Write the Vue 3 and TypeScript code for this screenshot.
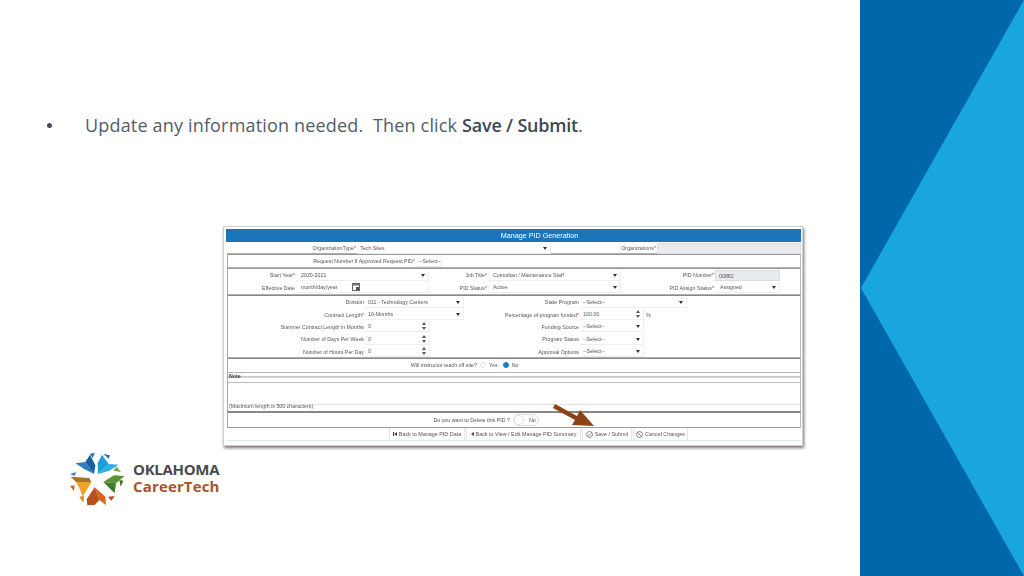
<script setup lang="ts">
const shards: { p: string; f: string }[] = [
  { p: '28,40 58,36 84,72 56,58', f: '#2a7fc1' },
  { p: '58,36 72,14 88,46 84,72', f: '#155f9f' },
  { p: '72,12 86,8 80,24', f: '#1e6aa8' },
  { p: '12,72 30,66 26,78', f: '#2d8bc8' },
  { p: '96,72 95,40 108,14 128,42', f: '#1b9fdc' },
  { p: '96,72 128,42 158,44 130,62', f: '#2cb0e6' },
  { p: '112,12 132,16 128,26', f: '#1677b8' },
  { p: '142,62 152,50 165,66', f: '#7fa642' },
  { p: '112,96 144,76 176,78 150,100', f: '#5a9236' },
  { p: '112,96 150,100 146,130', f: '#3f7a2a' },
  { p: '160,90 172,92 164,110', f: '#3f6f26' },
  { p: '86,112 118,140 120,165 100,150', f: '#d9641f' },
  { p: '86,112 100,150 86,165 64,166 62,148', f: '#b84f1e' },
  { p: '126,140 146,138 136,152', f: '#b5482a' },
  { p: '40,140 54,138 52,158', f: '#d68a2a' },
  { p: '14,80 70,84 76,96 30,96', f: '#a96f2b' },
  { p: '30,96 76,96 50,140 42,118', f: '#eda523' },
  { p: '12,108 26,106 24,124', f: '#b0742a' }
]
</script>

<template>
  <div class="slide">
    <main class="main">
      <div class="bullet-row">
        <span class="dot"></span>
        <p class="line">Update any information needed.&nbsp; Then click <b>Save / Submit</b>.</p>
      </div>

      <section class="win">
        <svg class="arrow" width="44" height="26" viewBox="0 0 44 26">
          <path d="M2 1 L24 13 L27 7 L41 23 L19 22 L22 17 L0 5 Z" fill="#8c4416" />
        </svg>
        <h1 class="head">Manage PID Generation</h1>

        <div class="row r1">
          <label class="lb" style="width:130px">OrganizationType<i>*</i></label>
          <div class="ctl sel" style="width:194px">Tech Sites</div>
          <label class="lb" style="width:106px">Organizations<i>*</i></label>
          <div class="ctl off" style="width:144px"></div>
        </div>

        <div class="box r2">
          <div class="row">
            <label class="lb" style="width:188px">Request Number If Approved Request PID<i>*</i></label>
            <div class="ctl">--Select--</div>
          </div>
        </div>

        <div class="box s3">
          <div class="row">
            <label class="lb" style="width:68px">Start Year<i>*</i></label>
            <div class="ctl sel" style="width:133px">2020-2021</div>
            <label class="lb" style="width:59px">Job Title<i>*</i></label>
            <div class="ctl sel" style="width:133px">Custodian / Maintenance Staff</div>
            <label class="lb" style="width:94px">PID Number<i>*</i></label>
            <div class="ctl off" style="width:65px">00882</div>
          </div>
          <div class="row">
            <label class="lb" style="width:68px">Effective Date</label>
            <div class="ctl date" style="width:133px">
              month/day/year
              <svg class="cal" width="8" height="8" viewBox="0 0 8 8">
                <rect x=".5" y=".5" width="7" height="7" fill="#fff" stroke="#666" />
                <rect x="1" y="1" width="6" height="1.5" fill="#777" />
                <rect x="4" y="4" width="3" height="3" fill="#555" />
              </svg>
            </div>
            <label class="lb" style="width:59px">PID Status<i>*</i></label>
            <div class="ctl sel" style="width:133px">Active</div>
            <label class="lb" style="width:94px">PID Assign Status<i>*</i></label>
            <div class="ctl sel" style="width:65px">Assigned</div>
          </div>
        </div>

        <div class="box s4">
          <div class="row">
            <label class="lb" style="width:137px">Division</label>
            <div class="ctl sel" style="width:99px">011 - Technology Centers</div>
            <label class="lb" style="width:116px">State Program</label>
            <div class="ctl sel" style="width:107px">--Select--</div>
          </div>
          <div class="row">
            <label class="lb" style="width:137px">Contract Length<i>*</i></label>
            <div class="ctl sel" style="width:99px">10-Months</div>
            <label class="lb" style="width:116px">Percentage of program funded<i>*</i></label>
            <div class="ctl num" style="width:64px">100.00</div>
            <span class="pct">%</span>
          </div>
          <div class="row">
            <label class="lb" style="width:137px">Summer Contract Length in Months</label>
            <div class="ctl num" style="width:65px">0</div>
            <label class="lb" style="width:150px">Funding Source</label>
            <div class="ctl sel" style="width:64px">--Select--</div>
          </div>
          <div class="row">
            <label class="lb" style="width:137px">Number of Days Per Week</label>
            <div class="ctl num" style="width:65px">0</div>
            <label class="lb" style="width:150px">Program Status</label>
            <div class="ctl sel" style="width:64px">--Select--</div>
          </div>
          <div class="row">
            <label class="lb" style="width:137px">Number of Hours Per Day</label>
            <div class="ctl num" style="width:65px">0</div>
            <label class="lb" style="width:150px">Approval Options</label>
            <div class="ctl sel" style="width:64px">--Select--</div>
          </div>
        </div>

        <div class="box s5">
          <div class="row">
            <label class="lb" style="width:250px">Will instructor teach off site?</label>
            <span class="radio"></span><span class="opt">Yes</span>
            <span class="radio on"></span><span class="opt">No</span>
          </div>
        </div>

        <div class="note">
          <strong class="note-t">Note</strong>
          <div class="note-area"></div>
          <small class="note-m">(Maximum length is 500 characters)</small>
        </div>

        <div class="box s6">
          <div class="row">
            <label class="lb" style="width:283px">Do you want to Delete this PID ?</label>
            <div class="toggle"><span class="knob"></span><span>No</span></div>
          </div>
        </div>

        <nav class="btns">
          <span class="btn" style="width:76px">
            <svg width="4" height="4" viewBox="0 0 4 4"><path d="M0 0H1V4H0ZM4 0V4L1 2Z" fill="#444" /></svg>
            Back to Manage PID Data
          </span>
          <span class="btn" style="width:115px">
            <svg width="3" height="4" viewBox="0 0 3 4"><path d="M3 0V4L0 2Z" fill="#444" /></svg>
            Back to View / Edit Manage PID Summary
          </span>
          <span class="btn" style="width:50px">
            <svg width="7" height="7" viewBox="0 0 8 8"><circle cx="4" cy="4" r="3.4" fill="none" stroke="#555" stroke-width=".8" /><path d="M2.2 4 L3.6 5.4 L6 2.6" fill="none" stroke="#555" stroke-width=".8" /></svg>
            Save / Submit
          </span>
          <span class="btn" style="width:55px">
            <svg width="7" height="7" viewBox="0 0 8 8"><circle cx="4" cy="4" r="3.4" fill="none" stroke="#555" stroke-width=".8" /><path d="M1.6 1.6 L6.4 6.4" stroke="#555" stroke-width=".8" /></svg>
            Cancel Changes
          </span>
        </nav>
      </section>

      <div class="logo">
        <svg class="star" width="62" height="60" viewBox="0 0 186 180">
          <polygon v-for="s in shards" :key="s.p" :points="s.p" :fill="s.f" />
        </svg>
        <div class="brand">
          <div class="b1">OKLAHOMA</div>
          <div class="b2">CareerTech</div>
        </div>
      </div>
    </main>

    <aside class="side">
      <svg width="164" height="576" viewBox="0 0 164 576">
        <rect width="164" height="576" fill="#0068a9" />
        <polygon points="164,0 1,288 164,576" fill="#19a6df" />
      </svg>
    </aside>
  </div>
</template>

<style>
html, body { margin: 0; background: #fff; }
</style>

<style scoped>
.slide { width: 1024px; height: 576px; display: flex; overflow: hidden; background: #fff; font-family: "Liberation Sans", Arial, sans-serif; }
.main { width: 860px; flex: none; }
.side { width: 164px; flex: none; line-height: 0; }

.bullet-row { display: flex; align-items: center; height: 26px; padding: 112px 0 0 47px; }
.dot { width: 5px; height: 5px; border-radius: 50%; background: #44505c; margin-right: 33px; }
.line { margin: 0; font: 400 18px/26px "Open Sans", sans-serif; color: #535d69; white-space: pre; letter-spacing: .17px; }
.line b { font-weight: 600; color: #3d4753; letter-spacing: -.2px; }

.win { position: relative; box-sizing: border-box; width: 580px; height: 220px; margin: 88px 0 0 223px; padding: 2px 1px 0 3px; border: 1px solid #cfcfcf; background: #fff; box-shadow: 1px 2px 3px rgba(0,0,0,.55); filter: blur(.45px); font-size: 5.3px; color: #555; }
.arrow { position: absolute; left: 329px; top: 176px; z-index: 2; }
.head { margin: 0 0 0 -1px; padding-left: 52px; height: 13px; background: #1b75bb; color: #fff; font: 400 7.2px/13px "Liberation Sans", sans-serif; text-align: center; }

.row { display: flex; align-items: center; height: 12.4px; white-space: nowrap; }
.r1 { height: 12px; }
.lb { flex: none; box-sizing: border-box; padding-right: 1px; text-align: right; font-size: 5.3px; color: #555; }
.lb i { color: #c33; font-style: normal; }
.ctl { position: relative; flex: none; box-sizing: border-box; height: 11px; padding-left: 3px; line-height: 11px; background: #fff; border-right: 1px solid #eee; border-bottom: 1px solid #eee; font-size: 5.3px; color: #555; }
.off { background: #e9ecee; border: 1px solid #dcdcdc; }
.s3 .ctl:not(.off) { padding-left: 5px; }
.sel::after { content: ""; position: absolute; right: 3px; top: 4px; border: 2px solid transparent; border-top: 3px solid #333; border-bottom: 0; }
.num::after { content: ""; position: absolute; right: 3px; top: 1px; border: 2px solid transparent; border-bottom: 3px solid #555; border-top: 0; }
.num::before { content: ""; position: absolute; right: 3px; top: 6px; border: 2px solid transparent; border-top: 3px solid #555; border-bottom: 0; }
.cal { position: absolute; left: 56px; top: 1px; }
.pct { margin-left: 2px; font-size: 5.3px; }

.box { box-sizing: border-box; border: 1px solid #999; border-bottom: 0; border-right-color: #bbb; border-left-color: #aaa; box-shadow: 0 -1px 0 #b0b0b0; }
.r2 { height: 14px; }
.s3 { height: 27px; }
.s4 { height: 63px; border-top-color: #888; }
.s5 { height: 14px; border-top-color: #888; }
.radio { width: 6px; height: 6px; border-radius: 50%; border: 1px solid #e2e2e2; box-sizing: border-box; margin: 0 3px 0 2px; }
.radio.on { background: #1c7fc4; border-color: #1c7fc4; margin-left: 5px; }
.opt { font-size: 5.3px; }

.note { position: relative; box-sizing: border-box; height: 39px; border-top: 1px solid #b5b5b5; border-left: 1px solid #aaa; border-right: 1px solid #bbb; }
.note::before { content: ""; display: block; position: absolute; left: 0; right: 0; top: 3px; height: 2px; background: #ccc; }
.note-t { position: absolute; left: 1px; top: 0; font-size: 5.3px; line-height: 6px; color: #444; }
.note-area { position: absolute; left: 0; right: 0; top: 9px; height: 21px; border-top: 1px solid #bbb; border-bottom: 1px solid #e2e2e2; }
.note-m { position: absolute; left: 1px; top: 30px; font-size: 5.3px; line-height: 6px; color: #555; }

.s6 { height: 17px; border-top: 2px solid #888; border-bottom: 1px solid #999; box-shadow: none; }
.s6 .row { height: 14px; }
.toggle { display: flex; align-items: center; gap: 5px; box-sizing: border-box; width: 26px; height: 12px; margin-left: 2px; border: 1px solid #ddd; border-radius: 6px; font-size: 5.3px; }
.knob { width: 10px; height: 10px; border-radius: 50%; border: 1px solid #e3e3e3; box-sizing: border-box; }

.btns { display: flex; height: 12px; padding-left: 162px; font-size: 5.4px; border-bottom: 1px solid #d9e8f3; }
.btn { display: flex; align-items: center; justify-content: center; gap: 2px; box-sizing: border-box; flex: none; height: 12px; border-left: 1px solid #e4e4e4; border-right: 1px solid #e4e4e4; white-space: nowrap; margin-right: 1px; }

.logo { display: flex; align-items: center; width: 170px; margin: 4px 0 0 66px; }
.star { flex: none; }
.brand { margin: -5px 0 0 5px; font-family: "Open Sans", sans-serif; font-weight: 700; line-height: 16.5px; }
.b1 { font-size: 15px; color: #4a4a4c; letter-spacing: -.3px; }
.b2 { font-size: 15px; color: #a8542c; letter-spacing: .15px; }
</style>
